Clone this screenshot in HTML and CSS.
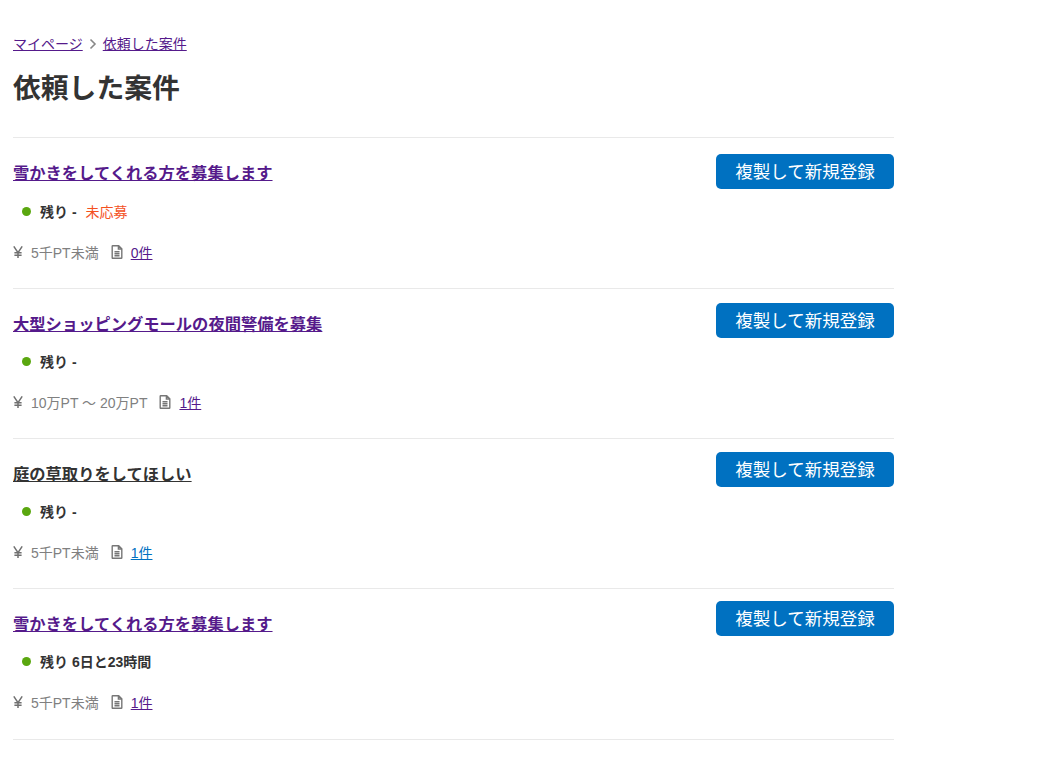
FILE: index.html
```html
<!DOCTYPE html>
<html lang="ja">
<head>
<meta charset="utf-8">
<title>依頼した案件</title>
<link rel="stylesheet" href="styles.css">
</head>
<body>
<svg class="sprite" width="0" height="0" aria-hidden="true">
  <symbol id="doc" viewBox="0 0 12 14">
    <path d="M1.2 1.2Q1.2.7 1.7.7h6l3.1 3.1v9q0 .5-.5.5H1.7q-.5 0-.5-.5z M7.4 1v3h3 M3.5 6.8h5 M3.5 8.8h5 M3.5 10.8h5" fill="none" stroke="#777" stroke-width="1.4"/>
  </symbol>
  <symbol id="yen" viewBox="0 0 10 12">
    <path d="M.8.4 5 6.6 9.2.4 M5 6.4V12 M1.4 6.8h7.2 M1.4 9.2h7.2" fill="none" stroke="#707070" stroke-width="1.5"/>
  </symbol>
</svg>
<main class="page">
  <nav class="crumbs">
    <a class="visited" href="#a">マイページ</a>
    <svg class="chev" viewBox="0 0 8 12" width="8" height="12"><path d="M1.5 1.5 6 6l-4.5 4.5" fill="none" stroke="#888" stroke-width="1.6"/></svg>
    <a class="visited" href="#b">依頼した案件</a>
  </nav>
  <h1 class="title">依頼した案件</h1>
  <ul class="list">
    <li class="row">
      <div class="top">
        <a class="job visited" href="#1">雪かきをしてくれる方を募集します</a>
        <a class="copy" href="#c1">複製して新規登録</a>
      </div>
      <div class="status"><span class="dot"></span><b>残り -</b><span class="open">未応募</span></div>
      <div class="meta"><svg class="yen"><use href="#yen"/></svg><span class="price">5千PT未満</span><svg class="doc"><use href="#doc"/></svg><a class="visited" href="#x">0件</a></div>
    </li>
    <li class="row">
      <div class="top">
        <a class="job visited" href="#2">大型ショッピングモールの夜間警備を募集</a>
        <a class="copy" href="#c2">複製して新規登録</a>
      </div>
      <div class="status"><span class="dot"></span><b>残り -</b></div>
      <div class="meta"><svg class="yen"><use href="#yen"/></svg><span class="price">10万PT 〜 20万PT</span><svg class="doc"><use href="#doc"/></svg><a class="visited" href="#x">1件</a></div>
    </li>
    <li class="row">
      <div class="top">
        <a class="job plain" href="#3">庭の草取りをしてほしい</a>
        <a class="copy" href="#c3">複製して新規登録</a>
      </div>
      <div class="status"><span class="dot"></span><b>残り -</b></div>
      <div class="meta"><svg class="yen"><use href="#yen"/></svg><span class="price">5千PT未満</span><svg class="doc"><use href="#doc"/></svg><a class="fresh" href="#x">1件</a></div>
    </li>
    <li class="row">
      <div class="top">
        <a class="job visited" href="#4">雪かきをしてくれる方を募集します</a>
        <a class="copy" href="#c4">複製して新規登録</a>
      </div>
      <div class="status"><span class="dot"></span><b>残り 6日と23時間</b></div>
      <div class="meta"><svg class="yen"><use href="#yen"/></svg><span class="price">5千PT未満</span><svg class="doc"><use href="#doc"/></svg><a class="visited" href="#x">1件</a></div>
    </li>
  </ul>
</main>
</body>
</html>
```
FILE: styles.css
```css
* { box-sizing: border-box; }
html, body { margin: 0; padding: 0; background: #fff; }
body {
  font-family: "Liberation Sans", "Noto Sans CJK JP", sans-serif;
  font-size: 14px;
  color: #333;
}
.sprite { position: absolute; }
.page { width: 894px; padding: 35px 0 0 13px; }
.visited { color: #551a8b; }
.fresh { color: #0071c1; }
.crumbs { display: flex; align-items: center; height: 18px; font-size: 14px; line-height: 18px; }
.chev { margin: 0 6px; }
.title { margin: 17px 0 0; font-size: 27.8px; line-height: 38px; font-weight: 700; color: #333; height: 67.4px; }
.list { list-style: none; margin: 0; padding: 0; border-bottom: 1px solid #e9e9e9; }
.row { height: 150.3px; border-top: 1px solid #e9e9e9; }
.top { display: flex; justify-content: space-between; align-items: flex-start; height: 52px; }
.job { font-size: 16.3px; font-weight: 700; line-height: 24px; margin-top: 23px; }
.plain { color: #333; }
.copy {
  display: block; width: 178px; height: 35px; margin-top: 16px;
  background: #0071c1; color: #fff; border-radius: 5px;
  font-size: 17.5px; line-height: 37px; text-align: center; text-decoration: none;
}
.row:nth-child(2) .copy { margin-top: 14px; }
.row:nth-child(3) .copy { margin-top: 13px; }
.row:nth-child(4) .copy { margin-top: 12px; }
.status { display: flex; align-items: center; height: 20px; margin: 10.15px 0 0 9px; font-size: 14px; }
.status b { font-weight: 700; color: #333; }
.dot { width: 9px; height: 9px; border-radius: 50%; background: #5aa70f; margin: 1px 9px 0 0; }
.open { color: #f4511e; margin-left: 9px; }
.meta { display: flex; align-items: center; height: 20px; margin-top: 21px; font-size: 14px; color: #808080; }
.yen { width: 10px; height: 12px; margin-right: 8px; }
.price { margin-right: 12px; }
.doc { width: 12px; height: 14px; margin-right: 8px; }
```
